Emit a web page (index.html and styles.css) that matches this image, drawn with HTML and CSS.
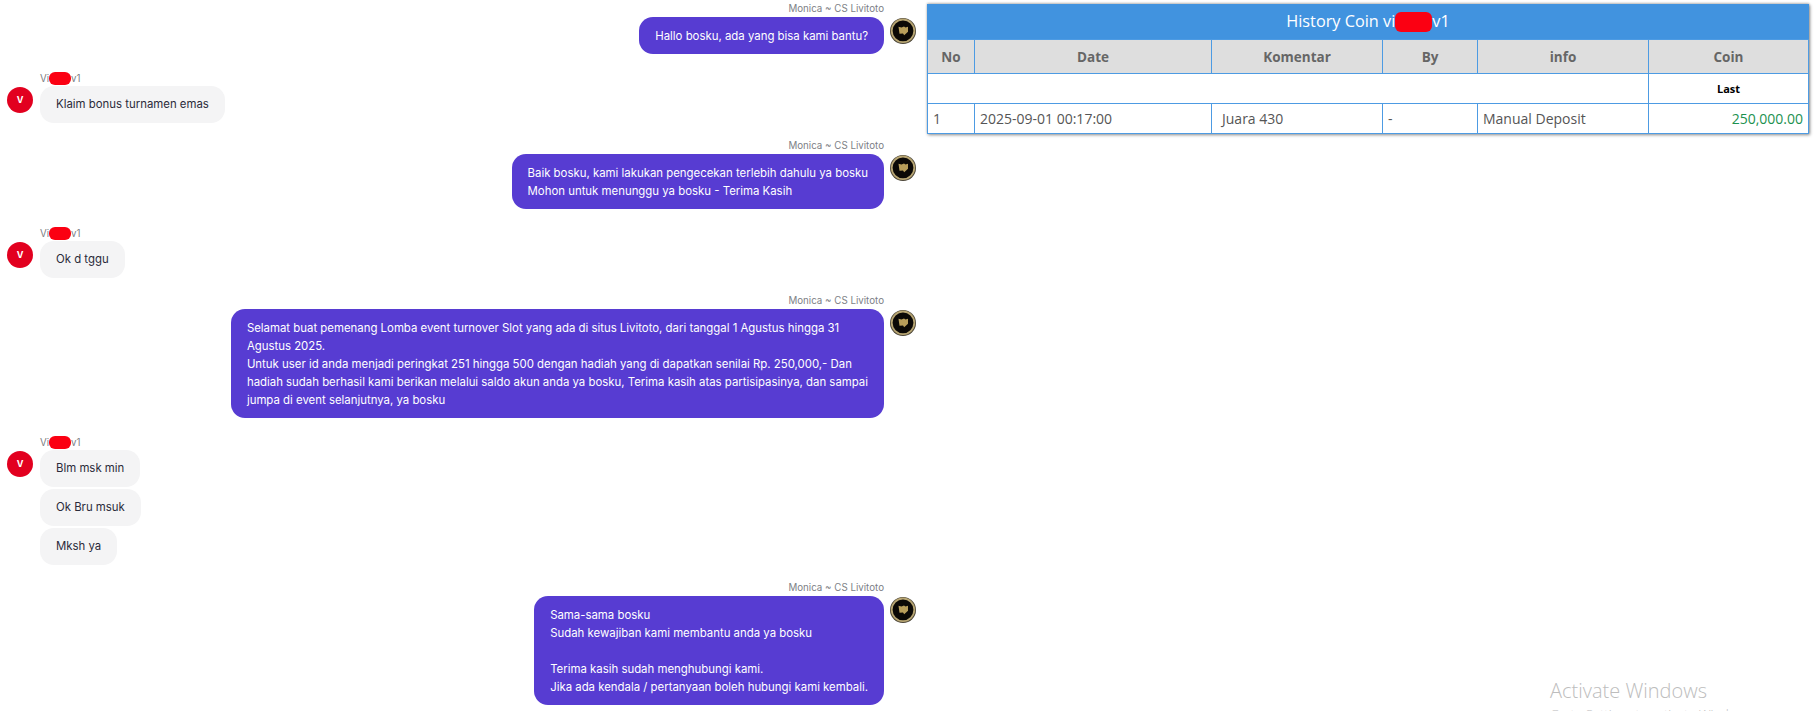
FILE: index.html
```html
<!DOCTYPE html>
<html lang="id">
<head>
  <meta charset="UTF-8" />
  <title>Chat Livitoto</title>
  <link rel="stylesheet" href="styles.css">
</head>
<body>

  <!-- Logo agen, dipakai ulang di tiap pesan -->
  <svg class="defs" width="0" height="0">
    <symbol id="agent-logo" viewBox="0 0 26 26">
      <circle cx="13" cy="13" r="13" fill="#4a4436"/>
      <circle cx="13" cy="12.800" r="11.300" fill="#0b0906" stroke="#b8a673" stroke-width="1.800"/>
      <path d="M8.500 8.800 L11.500 9.600 L14 8.600 L15.500 9.600 L18 8.800 L18 13.800 L14.200 17.200 L13 15.600 L9.500 15.800 Z" fill="#b89e5a"/>
    </symbol>
  </svg>

  <div class="chat">
    <div class="msg agent">
      <div class="body">
        <div class="name">Monica ~ CS Livitoto</div>
        <div class="bubble">Hallo bosku, ada yang bisa kami bantu?</div>
      </div>
      <svg class="logo"><use href="#agent-logo"/></svg>
    </div>

    <div class="msg user">
      <div class="avatar">V</div>
      <div class="body">
        <div class="name">Vi<span class="hide"></span>v1</div>
        <div class="bubble">Klaim bonus turnamen emas</div>
      </div>
    </div>

    <div class="msg agent">
      <div class="body">
        <div class="name">Monica ~ CS Livitoto</div>
        <div class="bubble">Baik bosku, kami lakukan pengecekan terlebih dahulu ya bosku<br>Mohon untuk menunggu ya bosku - Terima Kasih</div>
      </div>
      <svg class="logo"><use href="#agent-logo"/></svg>
    </div>

    <div class="msg user">
      <div class="avatar">V</div>
      <div class="body">
        <div class="name">Vi<span class="hide"></span>v1</div>
        <div class="bubble">Ok d tggu</div>
      </div>
    </div>

    <div class="msg agent">
      <div class="body">
        <div class="name">Monica ~ CS Livitoto</div>
        <div class="bubble">Selamat buat pemenang Lomba event turnover Slot yang ada di situs Livitoto, dari tanggal 1 Agustus hingga 31<br>Agustus 2025.<br>Untuk user id anda menjadi peringkat 251 hingga 500 dengan hadiah yang di dapatkan senilai Rp. 250,000,- Dan<br>hadiah sudah berhasil kami berikan melalui saldo akun anda ya bosku, Terima kasih atas partisipasinya, dan sampai<br>jumpa di event selanjutnya, ya bosku</div>
      </div>
      <svg class="logo"><use href="#agent-logo"/></svg>
    </div>

    <div class="msg user">
      <div class="avatar">V</div>
      <div class="body">
        <div class="name">Vi<span class="hide"></span>v1</div>
        <div class="bubble">Blm msk min</div>
        <div class="bubble">Ok Bru msuk</div>
        <div class="bubble">Mksh ya</div>
      </div>
    </div>

    <div class="msg agent">
      <div class="body">
        <div class="name">Monica ~ CS Livitoto</div>
        <div class="bubble">Sama-sama bosku<br>Sudah kewajiban kami membantu anda ya bosku<br><br>Terima kasih sudah menghubungi kami.<br>Jika ada kendala / pertanyaan boleh hubungi kami kembali.</div>
      </div>
      <svg class="logo"><use href="#agent-logo"/></svg>
    </div>
  </div>

  <!-- History coin, melayang di atas chat -->
  <div class="history">
    <div class="history-title">History Coin vi<span class="hide-title"></span>v1</div>
    <table>
      <thead>
        <tr>
          <th class="c-no">No</th>
          <th class="c-date">Date</th>
          <th class="c-komentar">Komentar</th>
          <th class="c-by">By</th>
          <th class="c-info">info</th>
          <th class="c-coin">Coin</th>
        </tr>
      </thead>
      <tbody>
        <tr class="row-last">
          <td colspan="5"></td>
          <td class="last">Last</td>
        </tr>
        <tr class="row-data">
          <td>1</td>
          <td>2025-09-01 00:17:00</td>
          <td class="pad">Juara 430</td>
          <td>-</td>
          <td>Manual Deposit</td>
          <td class="coin">250,000.00</td>
        </tr>
      </tbody>
    </table>
  </div>

  <div class="activate">
    <div class="activate-big">Activate Windows</div>
    <div class="activate-small">Go to Settings to activate Windows.</div>
  </div>

</body>
</html>
```

FILE: styles.css
```css
html, body {
  height: 100%;
}

body {
  font-family: Inter, 'Noto Sans', sans-serif;
  background-color: #fff;
  color: #2b2b3a;
  margin: 0;
  overflow: hidden;
}

.defs {
  display: block;
}

.chat {
  width: 924px;
  padding-top: 3px;
}

.msg {
  display: flex;
  margin-bottom: 15.500px;
}

.msg.agent {
  justify-content: flex-end;
}

.msg.user {
  padding-left: 7px;
}

.body {
  display: flex;
  flex-direction: column;
  min-width: 0;
}

.agent .body {
  align-items: flex-end;
}

.user .body {
  align-items: flex-start;
}

.name {
  font-size: 9.750px;
  line-height: 12px;
  height: 12px;
  color: #7d7f86;
  margin-bottom: 2px;
}

.bubble {
  font-size: 11.400px;
  line-height: 18px;
  padding: 9.500px 16px;
  border-radius: 14px;
  margin-bottom: 2px;
}

.agent .bubble {
  background-color: #573cd2;
  color: #fff;
}

.user .bubble {
  background-color: #f4f4f5;
  color: #2b2b3a;
}

.logo {
  width: 26px;
  height: 26px;
  margin: 15px 8px 0 6px;
  flex: none;
}

.avatar {
  width: 26px;
  height: 26px;
  border-radius: 50%;
  background-color: #e2001f;
  color: #fff;
  font-size: 9px;
  font-weight: 700;
  display: flex;
  align-items: center;
  justify-content: center;
  margin: 15px 7px 0 0;
  flex: none;
}

.hide {
  display: inline-block;
  width: 22px;
  height: 13px;
  vertical-align: -3px;
  background-color: #fb0012;
  border-radius: 6px;
}

.history {
  position: absolute;
  left: 927px;
  top: 4px;
  width: 882px;
  font-family: 'Open Sans', 'Noto Sans', sans-serif;
  box-shadow: 1px 1px 3px rgba(0, 0, 0, 0.45), 0 -1px 2px rgba(0, 0, 0, 0.2);
}

.history-title {
  height: 35px;
  line-height: 35px;
  background-color: #4193df;
  color: #fff;
  font-size: 16.300px;
  text-align: center;
}

.hide-title {
  display: inline-block;
  width: 37px;
  height: 20px;
  vertical-align: -5px;
  background-color: #fb0012;
  border-radius: 6px;
}

table {
  width: 100%;
  border-collapse: collapse;
  table-layout: fixed;
  background-color: #fff;
  font-size: 14px;
}

th, td {
  box-sizing: border-box;
  border: 1px solid #4d9be3;
  padding: 0 5px;
  text-align: left;
  color: #555;
}

th {
  background-color: #dedede;
  height: 34px;
  text-align: center;
  font-size: 13.500px;
  font-weight: 700;
  color: #666;
}

/* Lebar kolom */
.c-no { width: 47px; }
.c-date { width: 237px; }
.c-komentar { width: 171px; }
.c-by { width: 95px; }
.c-info { width: 171px; }

.row-last td {
  height: 30px;
}

.row-data td {
  height: 30px;
}

.last {
  text-align: center;
  font-size: 11px;
  font-weight: 700;
  color: #000;
}

.pad {
  padding-left: 10px;
}

.coin {
  text-align: right;
  color: #1c9150;
}

.activate {
  position: absolute;
  left: 1550px;
  top: 677px;
  font-family: 'Open Sans', 'Noto Sans', sans-serif;
  font-weight: 300;
  color: #bdbdbd;
}

.activate-big {
  font-size: 20px;
  line-height: 28px;
}

.activate-small {
  font-size: 13px;
  line-height: 18px;
}
```
